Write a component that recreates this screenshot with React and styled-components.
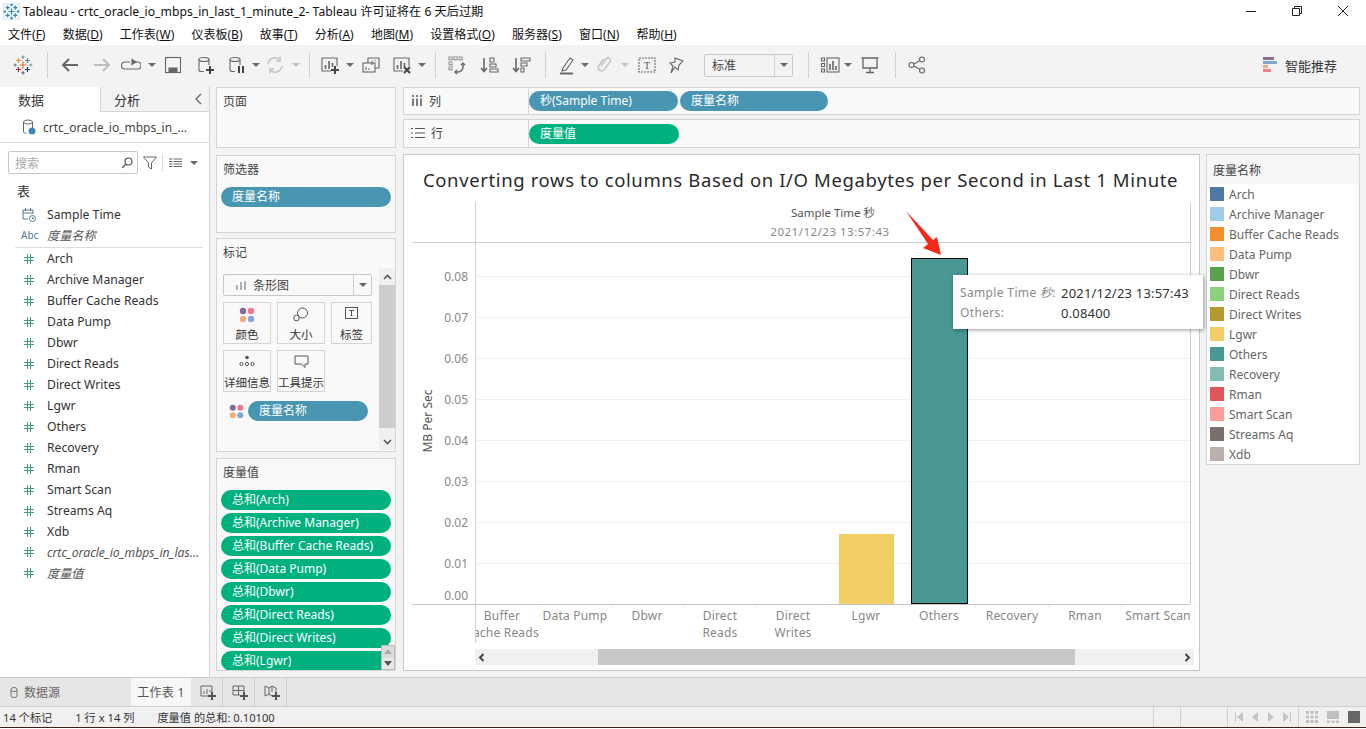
import React from 'react';
import styled, { createGlobalStyle } from 'styled-components';

const GlobalStyle = createGlobalStyle`
  html, body { margin: 0; padding: 0; background: #fff; overflow: hidden; }
  * { box-sizing: border-box; }
  body { font-family: "Noto Sans", "Noto Sans CJK SC", sans-serif; color: #333; }
`;

const Page = styled.div`
  width: 1366px;
  height: 729px;
  display: flex;
  flex-direction: column;
  overflow: hidden;
`;

const TitleBar = styled.div`
  height: 22px;
  display: flex;
  align-items: center;
  padding-left: 3px;
  background: #fff;
  font-size: 12.2px;
  color: #111;
`;
const TitleText = styled.span`
  margin-left: 3px;
  flex: 1;
`;
const WinBtn = styled.div`
  width: 46px;
  height: 22px;
  display: flex;
  align-items: center;
  justify-content: center;
`;

const MenuBar = styled.div`
  height: 23px;
  display: flex;
  align-items: center;
  background: #fff;
  padding-left: 8px;
  gap: 17.2px;
  font-size: 12px;
  color: #111;
`;
const MenuItem = styled.span`
  u { text-underline-offset: 1px; }
`;

const Toolbar = styled.div`
  height: 40px;
  display: flex;
  align-items: center;
  background: #f3f3f3;
`;
const Tool = styled.div`
  flex: none;
  width: ${p => p.$w || 20}px;
  height: 24px;
  margin-left: ${p => p.$ml}px;
  display: flex;
  align-items: center;
  justify-content: center;
`;
const Sep = styled.div`
  flex: none;
  width: 1px;
  height: 26px;
  margin-left: ${p => p.$ml}px;
  background: #cfcfcf;
`;
const Caret = styled.div`
  flex: none;
  width: 0;
  height: 0;
  margin-left: ${p => p.$ml}px;
  border-left: 4px solid transparent;
  border-right: 4px solid transparent;
  border-top: 4px solid ${p => (p.$off ? '#c4c4c4' : '#6a6a6a')};
`;
const ComboBox = styled.div`
  flex: none;
  width: ${p => p.$w}px;
  height: ${p => p.$h}px;
  margin-left: ${p => p.$ml || 0}px;
  display: flex;
  align-items: center;
  background: ${p => p.$bg || '#f3f3f3'};
  border: 1px solid #c8c8c8;
  border-radius: 2px;
  font-size: 12px;
  color: #444;
`;
const ComboText = styled.div`
  flex: 1;
  display: flex;
  align-items: center;
  gap: 7px;
  padding-left: ${p => p.$pl || 7}px;
  min-width: 0;
`;
const ComboArrow = styled.div`
  width: 18px;
  height: 100%;
  border-left: 1px solid #d0d0d0;
  display: flex;
  align-items: center;
  justify-content: center;
  &::after {
    content: '';
    border-left: 4px solid transparent;
    border-right: 4px solid transparent;
    border-top: 4px solid #666;
  }
`;
const SmartBtn = styled.div`
  margin-left: auto;
  margin-right: 29px;
  display: flex;
  align-items: center;
  gap: 6px;
  font-size: 13px;
  color: #333;
`;

const Main = styled.div`
  height: 592px;
  display: flex;
  background: #f3f3f3;
`;

const DataPane = styled.div`
  width: 210px;
  flex: none;
  background: #fff;
  border-right: 1px solid #d4d4d4;
  display: flex;
  flex-direction: column;
  border-top: 2px solid #f3f3f3;
`;
const PaneTabs = styled.div`
  height: 25px;
  display: flex;
  font-size: 13px;
`;
const PaneTab = styled.div`
  width: ${p => p.$w}px;
  display: flex;
  align-items: center;
  padding-left: ${p => p.$pl}px;
  position: relative;
  color: #333;
  background: ${p => (p.$on ? '#fff' : '#f3f3f3')};
  border-left: ${p => (p.$on ? 'none' : '1px solid #d4d4d4')};
  border-bottom: ${p => (p.$on ? 'none' : '1px solid #d4d4d4')};
`;
const Chevron = styled.span`
  position: absolute;
  right: 6px;
  top: 6px;
  display: flex;
`;
const SourceRow = styled.div`
  height: 31px;
  display: flex;
  align-items: center;
  gap: 7px;
  padding-left: 22px;
  font-size: 12px;
  color: #444;
  border-bottom: 1px solid #e0e0e0;
`;
const SourceName = styled.span`
  width: 146px;
  white-space: nowrap;
  overflow: hidden;
  text-overflow: ellipsis;
`;
const SearchRow = styled.div`
  display: flex;
  align-items: center;
  padding: 8px 0 0 8px;
`;
const SearchBox = styled.div`
  width: 130px;
  height: 23px;
  border: 1px solid #c8c8c8;
  border-radius: 2px;
  display: flex;
  align-items: center;
  justify-content: space-between;
  padding: 0 4px 0 6px;
  font-size: 12px;
  color: #aaa;
`;
const SearchTools = styled.div`
  display: flex;
  align-items: center;
  margin-left: 5px;
`;
const SearchSep = styled.div`
  width: 1px;
  height: 18px;
  background: #ddd;
  margin: 0 6px 0 5px;
`;
const SectionLabel = styled.div`
  font-size: 13px;
  color: #333;
  padding: 7px 0 0 17px;
  height: 30px;
`;
const FieldRow = styled.div`
  height: ${p => p.$h || 21}px;
  display: flex;
  align-items: center;
  font-size: 12.2px;
  color: ${p => (p.$italic ? '#555' : '#333')};
  font-style: ${p => (p.$italic ? 'italic' : 'normal')};
`;
const FieldIcon = styled.span`
  width: 47px;
  flex: none;
  display: flex;
  justify-content: ${p => (p.$abc ? 'flex-start' : 'center')};
  padding-left: ${p => (p.$abc ? '21px' : '10px')};
  font-size: 10px;
  font-style: normal;
  color: #4e7a9c;
`;
const FieldText = styled.span`
  white-space: nowrap;
  overflow: hidden;
  text-overflow: ellipsis;
  width: 153px;
`;
const FieldDivider = styled.div`
  height: 1px;
  background: #ddd;
  margin: 3px 6px 0 15px;
`;

const Cards = styled.div`
  width: 180px;
  flex: none;
  margin-left: 6px;
  padding-top: 2px;
  display: flex;
  flex-direction: column;
`;
const Card = styled.div`
  height: ${p => p.$h}px;
  margin-top: ${p => p.$mt || 0}px;
  background: #f9f9f9;
  border: 1px solid #d4d4d4;
  position: relative;
  overflow: hidden;
  flex: none;
`;
const CardTitle = styled.div`
  font-size: 12px;
  color: #444;
  padding: 4px 0 0 6px;
  height: 24px;
`;
const Pill = styled.div`
  width: ${p => p.$w}px;
  height: 20px;
  flex: none;
  margin-left: ${p => p.$ml || 0}px;
  border-radius: 10px;
  background: ${p => (p.$green ? '#00b180' : '#4996b2')};
  color: #fff;
  font-size: 12px;
  line-height: 20px;
  padding-left: 11px;
  white-space: nowrap;
  overflow: hidden;
`;
const MarksBody = styled.div`
  display: flex;
  justify-content: space-between;
`;
const MarksLeft = styled.div`
  padding: 11px 0 0 6px;
`;
const MarkGrid = styled.div`
  display: grid;
  grid-template-columns: 48px 48px 41px;
  grid-auto-rows: 42px;
  gap: 6px;
  margin-top: 6px;
`;
const MarkBtn = styled.div`
  border: 1px solid #d4d4d4;
  background: #f9f9f9;
  display: flex;
  flex-direction: column;
  align-items: center;
  justify-content: space-between;
  padding: 4px 0 1px;
  font-size: 11.5px;
  line-height: 14px;
  color: #333;
  white-space: nowrap;
`;
const MarkPillRow = styled.div`
  display: flex;
  align-items: center;
  margin: 9px 0 0 6px;
`;
const VScroll = styled.div`
  width: 16px;
  height: 182px;
  margin-top: 5px;
  background: #f0f0f0;
  display: flex;
  flex-direction: column;
  align-items: center;
`;
const VThumb = styled.div`
  width: 16px;
  height: 143px;
  background: #cdcdcd;
`;
const ScrollArrow = styled.div`
  height: 17px;
  display: flex;
  align-items: center;
  margin-top: ${p => (p.$end ? 'auto' : '0')};
`;
const MeasureList = styled.div`
  display: flex;
  flex-direction: column;
  gap: 3px;
  padding: 7px 0 0 4px;
`;
const MiniScroll = styled.div`
  position: absolute;
  right: 0;
  bottom: 0;
  width: 14px;
  height: 25px;
  display: flex;
  flex-direction: column;
  background: #dcdcdc;
  border: 1px solid #bcbcbc;
`;
const MiniArrow = styled.div`
  flex: 1;
  display: flex;
  align-items: center;
  justify-content: center;
  background: ${p => p.$bg};
  &::after {
    content: '';
    border-left: 4px solid transparent;
    border-right: 4px solid transparent;
    ${p => (p.$up ? 'border-bottom: 5px solid #aaa;' : 'border-top: 5px solid #555;')}
  }
`;

const Workspace = styled.div`
  flex: 1;
  min-width: 0;
  margin-left: 7px;
  padding: 2px 6px 0 0;
  display: flex;
  flex-direction: column;
`;
const Shelf = styled.div`
  height: ${p => p.$h}px;
  margin-top: ${p => p.$mt || 0}px;
  background: #f9f9f9;
  border: 1px solid #d4d4d4;
  display: flex;
  align-items: center;
  flex: none;
`;
const ShelfLabel = styled.div`
  width: 125px;
  height: 100%;
  flex: none;
  display: flex;
  align-items: center;
  gap: 6px;
  padding: 0 0 1px 7px;
  font-size: 12px;
  color: #444;
  border-right: 1px solid #d4d4d4;
`;
const ViewRow = styled.div`
  display: flex;
  margin-top: 6px;
  gap: 6px;
`;
const ChartPanel = styled.div`
  width: 797px;
  height: 517px;
  background: #fff;
  border: 1px solid #c8c8c8;
  position: relative;
  display: flex;
  flex-direction: column;
`;
const ChartTitle = styled.div`
  height: 47px;
  padding: 11px 0 0 19px;
  font-size: 18.5px;
  line-height: 27px;
  font-weight: 400;
  color: #2b2b2b;
  letter-spacing: 0.62px;
  white-space: nowrap;
`;
const ChartSvg = styled.svg`
  display: block;
  width: 795px;
  height: 446px;
  font-family: "Noto Sans", "Noto Sans CJK SC", sans-serif;
`;
const HScroll = styled.div`
  height: 16px;
  margin: 1px 5px 0 71px;
  background: #f0f0f0;
  display: flex;
  align-items: center;
  justify-content: space-between;
  position: relative;
  padding: 0 3px;
`;
const HThumb = styled.div`
  position: absolute;
  left: 123px;
  width: 477px;
  top: 0;
  bottom: 0;
  background: #c8c8c8;
`;
const Tooltip = styled.div`
  position: absolute;
  left: 549px;
  top: 120px;
  width: 250px;
  height: 54px;
  background: #fff;
  box-shadow: 1px 1px 4px rgba(0, 0, 0, 0.4);
  padding: 8px 0 0 7px;
  font-size: 12px;
  line-height: 20px;
  z-index: 2;
  display: grid;
  grid-template-columns: 101px 1fr;
  grid-auto-rows: 20px;
  white-space: nowrap;
  letter-spacing: 0.35px;
`;
const TipKey = styled.span`
  color: #8a8a8a;
`;
const TipVal = styled.span`
  color: #333;
  font-size: 13px;
  letter-spacing: 0.2px;
`;
const Legend = styled.div`
  width: 154px;
  height: 311px;
  flex: none;
  background: #fff;
  border: 1px solid #d4d4d4;
`;
const LegendTitle = styled.div`
  height: 29px;
  background: #f7f7f7;
  font-size: 12px;
  padding: 6px 0 0 6px;
  color: #444;
`;
const LegendRow = styled.div`
  height: 20px;
  display: flex;
  align-items: center;
  gap: 5px;
  padding-left: 3px;
  font-size: 12px;
  color: #666;
`;
const Swatch = styled.span`
  width: 14px;
  height: 14px;
  flex: none;
  background: ${p => p.$c};
`;

const TabBar = styled.div`
  height: 30px;
  display: flex;
  background: #e6e6e6;
  border-top: 1px solid #cfcfcf;
  border-bottom: 1px solid #cfcfcf;
  font-size: 12px;
  color: #555;
`;
const SourceTab = styled.div`
  width: 131px;
  display: flex;
  align-items: center;
  gap: 6px;
  padding-left: 10px;
  color: #666;
`;
const SheetTab = styled.div`
  width: 60px;
  display: flex;
  align-items: center;
  justify-content: center;
  background: #f7f7f7;
  letter-spacing: 0.3px;
`;
const AddTab = styled.div`
  width: 32px;
  display: flex;
  align-items: center;
  justify-content: center;
  padding-left: 2px;
  border-right: 1px solid #cfcfcf;
`;
const StatusBar = styled.div`
  height: 21px;
  display: flex;
  align-items: center;
  padding-left: 3px;
  background: #f0f0f0;
  font-size: 11.2px;
  color: #333;
  border-bottom: 1px solid #3a2218;
`;
const StatusText = styled.span`
  margin-right: ${p => p.$mr}px;
  white-space: nowrap;
`;
const StatusCell = styled.div`
  height: 100%;
  width: ${p => p.$w}px;
  flex: none;
  border-left: 1px solid #cfcfcf;
  display: flex;
  align-items: center;
  justify-content: center;
  gap: ${p => p.$gap || 0}px;
  margin-left: ${p => (p.$push ? 'auto' : '0')};
`;
const NavIcon = styled.svg`
  width: 10px;
  height: 10px;
`;
const ScrollEnd = styled.svg`
  position: relative;
  z-index: 1;
  width: 7px;
  height: 9px;
`;

const Svg = ({ s = 20, vb = 20, children, ...rest }) => (
  <svg width={s} height={s} viewBox={`0 0 ${vb} ${vb}`} fill="none" stroke="#666" strokeWidth="1.1" {...rest}>
    {children}
  </svg>
);

const crosses = [
  [10, 10, 3.5, '#e8762d'],
  [5.5, 5.5, 2.5, '#eb912b'],
  [14.5, 5.5, 2.5, '#59879b'],
  [5.5, 14.5, 2.5, '#c72035'],
  [14.5, 14.5, 2.5, '#1f447a'],
  [10, 2.2, 1.6, '#7099a6'],
  [10, 17.8, 1.6, '#5b6591'],
  [2.2, 10, 1.6, '#59879b'],
  [17.8, 10, 1.6, '#7099a6'],
];
const LogoIcon = () => (
  <Svg strokeWidth="1.2">
    {crosses.map(([x, y, r, c]) => (
      <path key={`${x}-${y}`} d={`M${x} ${y - r}v${r * 2}M${x - r} ${y}h${r * 2}`} stroke={c} />
    ))}
  </Svg>
);
const TitleLogo = () => (
  <Svg s={17}>
    <rect x="0.5" y="0.5" width="19" height="19" fill="#f2f5f8" stroke="#dfe3e8" />
    {crosses.map(([x, y, r]) => (
      <path key={`${x}-${y}`} d={`M${x} ${y - r}v${r * 2}M${x - r} ${y}h${r * 2}`} stroke="#3a87c0" strokeWidth="1.4" />
    ))}
  </Svg>
);
const Back = () => (
  <Svg strokeWidth="2"><path d="M18 10H3M9 4l-6 6 6 6" /></Svg>
);
const Forward = () => (
  <Svg strokeWidth="2" stroke="#bdbdbd"><path d="M2 10h15M11 4l6 6-6 6" /></Svg>
);
const Loop = () => (
  <Svg><path d="M9 7H4a3 3 0 0 0 0 7h12a3 3 0 0 0 1-7h-2" /><path d="M11 4.5l4 2.5-4 2.5z" fill="#666" /></Svg>
);
const Save = () => (
  <Svg><rect x="2.5" y="2.5" width="15" height="15" /><path d="M6 17v-4h8v4" fill="#666" /></Svg>
);
const Cyl = ({ children }) => (
  <Svg>
    <ellipse cx="9" cy="4.5" rx="5" ry="2" />
    <path d="M4 4.5V15a2 2 0 0 0 2 1.5h3M14 4.5V10" />
    {children}
  </Svg>
);
const Plus = ({ x = 15, y = 15 }) => (
  <path d={`M${x - 4} ${y}h8M${x} ${y - 4}v8`} stroke="#444" strokeWidth="2" />
);
const SheetBars = ({ children }) => (
  <Svg>
    <path d="M11 16H2V3h15v8" />
    <path d="M5.5 14v-4M9 14V6M12.5 12V8" strokeWidth="1.6" />
    {children}
  </Svg>
);
const Refresh = () => (
  <Svg stroke="#c4c4c4" strokeWidth="1.6">
    <path d="M3 9a7 7 0 0 1 12-4M17 11a7 7 0 0 1-12 4" />
    <path d="M15 1.5V6h-4M5 18.5V14h4" />
  </Svg>
);
const Duplicate = () => (
  <Svg>
    <path d="M7 8V3h11v10h-4" />
    <rect x="2" y="8" width="12" height="9" />
    <path d="M11 10V6M14 6V5M5 15v-3M8 15v-2" />
  </Svg>
);
const Swap = () => (
  <Svg>
    <path d="M2 2h3v3H2zM7 2h3v3H7zM12 2h3v3h-3zM2 7h3v3H2zM2 12h3v3H2z" strokeDasharray="1.5 0.8" />
    <path d="M16 8v4a5 5 0 0 1-5 5H9" strokeWidth="1.5" />
    <path d="M14 10l2-2 2 2M10 15l-2 2 2 2" strokeWidth="1.4" />
  </Svg>
);
const SortAsc = () => (
  <Svg>
    <path d="M5 3v13M2 13l3 3.5L8 13" strokeWidth="1.6" />
    <path d="M11 3h4v4h-4zM11 9h6v3h-6zM11 14h8v3h-8z" />
  </Svg>
);
const SortDesc = () => (
  <Svg>
    <path d="M5 3v13M2 13l3 3.5L8 13" strokeWidth="1.6" />
    <path d="M10 3h9v3h-9zM10 8h6v3h-6zM10 13h3v4h-3z" />
  </Svg>
);
const Pen = () => (
  <Svg>
    <path d="M5 13L12 3l3 2-7 10-4 1z" />
    <path d="M2 18.5h13" strokeWidth="2" />
  </Svg>
);
const Clip = () => (
  <Svg stroke="#c4c4c4" strokeWidth="1.5">
    <path d="M6 11l5-7a2.5 2.5 0 0 1 4 3l-6 8a3.5 3.5 0 0 1-5.5-4l5-7" />
  </Svg>
);
const TextBox = () => (
  <Svg>
    <rect x="2" y="3" width="16" height="14" strokeDasharray="2 1" />
    <text x="10" y="14" textAnchor="middle" fontSize="10" fill="#555" stroke="none" fontFamily="Liberation Serif, serif">T</text>
  </Svg>
);
const Pin = () => (
  <Svg>
    <path d="M8 3l8 3-4 4-1 5-3-3-4 6 2-7-3-3 5-1z" />
  </Svg>
);
const ShowMe = () => (
  <Svg>
    <path d="M1.5 3h3v3h-3zM1.5 8.5h3v3h-3zM1.5 14h3v3h-3z" />
    <rect x="7" y="3" width="12" height="14" />
    <path d="M10 15V9M13 15V6M16 15v-4" strokeWidth="1.6" />
  </Svg>
);
const Present = () => (
  <Svg>
    <path d="M1.5 3h17M3 3v10h14V3M10 13v4M6 17.5h8" strokeWidth="1.3" />
  </Svg>
);
const Share = () => (
  <Svg>
    <circle cx="4.5" cy="10" r="2.5" />
    <circle cx="15" cy="4.5" r="2.5" />
    <circle cx="15" cy="15.5" r="2.5" />
    <path d="M7 9l6-3.5M7 11l6 3.5" />
  </Svg>
);
const Smart = () => (
  <svg width="16" height="16" viewBox="0 0 16 16">
    <rect x="0" y="0" width="11" height="3" fill="#8b6f97" />
    <rect x="0" y="4" width="14" height="3" fill="#7fa6d0" />
    <rect x="0" y="8" width="5" height="3" fill="#f4ad7f" />
    <rect x="0" y="12" width="8" height="3" fill="#f57f8f" />
  </svg>
);
const Dots = ({ s = 16 }) => (
  <svg width={s} height={s} viewBox="0 0 16 16">
    <circle cx="4" cy="4" r="3.2" fill="#886a96" />
    <circle cx="12" cy="4" r="3.2" fill="#f5758c" />
    <circle cx="4" cy="12" r="3.2" fill="#f4ab7f" />
    <circle cx="12" cy="12" r="3.2" fill="#84a8d2" />
  </svg>
);
const Hash = () => (
  <svg width="10" height="10" viewBox="0 0 10 10" fill="none" stroke="#3f9f7f" strokeWidth="1">
    <path d="M3.5 0v10M6.5 0v10M0 3.5h10M0 6.5h10" />
  </svg>
);
const Rows = () => (
  <svg width="14" height="12" viewBox="0 0 14 12" fill="none" stroke="#555">
    <path d="M0 1.5h2M4 1.5h10M0 6h2M4 6h10M0 10.5h2M4 10.5h10" />
  </svg>
);
const Cols = () => (
  <svg width="12" height="11" viewBox="0 0 12 11" fill="none" stroke="#555" strokeWidth="1.5">
    <path d="M2 0v2M6 0v2M10 0v2M2 3.500v7.500M6 3.500v7.500M10 3.500v7.500" />
  </svg>
);
const DsCheck = () => (
  <svg width="14" height="16" viewBox="0 0 14 16" fill="none" stroke="#666">
    <ellipse cx="6" cy="3" rx="4.5" ry="2" />
    <path d="M1.500 3v9a2 2 0 0 0 3 2M10.500 3v6" />
    <circle cx="10" cy="12" r="3.500" fill="#3f88b5" stroke="none" />
  </svg>
);
const Chev = ({ d = 'M7 1L2 6l5 5' }) => (
  <svg width="9" height="12" viewBox="0 0 9 12" fill="none" stroke="#666" strokeWidth="1.3"><path d={d} /></svg>
);
const BoldChev = ({ d }) => (
  <ScrollEnd viewBox="0 0 7 9" fill="none" stroke="#444" strokeWidth="2"><path d={d} /></ScrollEnd>
);
const CalClock = () => (
  <svg width="14" height="14" viewBox="0 0 14 14" fill="none" stroke="#4e7a9c">
    <path d="M6 11H1V2h10v4M1 5h10M3.5 0v3M8.5 0v3" />
    <circle cx="10.5" cy="10.5" r="3" />
    <path d="M10.5 9v1.5h1.5" />
  </svg>
);
const Search = () => (
  <svg width="12" height="12" viewBox="0 0 12 12" fill="none" stroke="#555" strokeWidth="1.2">
    <circle cx="7.5" cy="4.5" r="3.5" />
    <path d="M5 7l-4 4" />
  </svg>
);
const Filter = () => (
  <svg width="14" height="14" viewBox="0 0 14 14" fill="none" stroke="#666">
    <path d="M0.5 1h13L8.5 7v6l-3-2V7z" />
  </svg>
);
const ListView = () => (
  <svg width="13" height="10" viewBox="0 0 13 10" stroke="#666">
    <path d="M0 1h3.5M4.5 1h8.5M0 3.500h3.500M4.500 3.500h8.500M0 6h3.500M4.500 6h8.500M0 8.500h3.500M4.500 8.500h8.500" />
  </svg>
);
const MiniBars = () => (
  <svg width="10" height="9" viewBox="0 0 10 9" fill="#b0b0b0">
    <rect x="0" y="4" width="2" height="5" />
    <rect x="4" y="1" width="2" height="8" />
    <rect x="8" y="0" width="2" height="9" />
  </svg>
);
const SizeIco = () => (
  <svg width="16" height="15" viewBox="0 0 16 15" fill="none" stroke="#555">
    <circle cx="9.5" cy="6" r="5" />
    <circle cx="3.5" cy="11" r="2.8" fill="#f9f9f9" />
  </svg>
);
const LabelIco = () => (
  <svg width="14" height="13" viewBox="0 0 14 13" fill="none" stroke="#555">
    <rect x="0.5" y="0.5" width="12" height="11" />
    <path d="M4 3.5h5M6.5 3.5v5M5.500 8.500h2" />
  </svg>
);
const DetailIco = () => (
  <svg width="16" height="12" viewBox="0 0 16 12" fill="none" stroke="#555">
    <circle cx="8" cy="2.5" r="1.8" fill="#555" stroke="none" />
    <circle cx="2.5" cy="9" r="1.6" />
    <circle cx="8" cy="9" r="1.6" />
    <circle cx="13.5" cy="9" r="1.6" />
  </svg>
);
const TipIco = () => (
  <svg width="15" height="14" viewBox="0 0 15 14" fill="none" stroke="#555">
    <path d="M1 1h13v8h-3v3.5L7.5 9H1z" />
  </svg>
);
const ScrollChev = ({ up }) => (
  <svg width="9" height="6" viewBox="0 0 9 6" fill="none" stroke="#555" strokeWidth="1.6">
    <path d={up ? 'M1 5l3.5-3.5L8 5' : 'M1 1l3.5 3.5L8 1'} />
  </svg>
);
const DbTab = () => (
  <svg width="8" height="11" viewBox="0 0 8 11" fill="none" stroke="#777">
    <path d="M1 2.5a3 2 0 0 1 6 0V9a3 1.5 0 0 1-6 0zM1 3a3 1.5 0 0 0 6 0" />
  </svg>
);
const AddSheet = ({ kind }) => (
  <svg width="16" height="16" viewBox="0 0 16 16" fill="none" stroke="#666">
    {kind === 'sheet' && <path d="M8 12H1V2h11v6M4 10V7M7 10V5M10 8V6" />}
    {kind === 'dash' && <path d="M8 11H1V2h11v6M6.5 2v9M1 6.5h11" />}
    {kind === 'story' && <path d="M8 12l-3-2-4 2V2l4 2 3-2 4 2v4M5 4v6M8 2v6" />}
    <path d="M12 8v8M8 12h8" stroke="#555" strokeWidth="2" />
  </svg>
);

const menus = [
  ['文件', 'F'], ['数据', 'D'], ['工作表', 'W'], ['仪表板', 'B'], ['故事', 'T'], ['分析', 'A'],
  ['地图', 'M'], ['设置格式', 'O'], ['服务器', 'S'], ['窗口', 'N'], ['帮助', 'H'],
];

const legend = [
  ['Arch', '#4e79a7'], ['Archive Manager', '#a0cbe8'], ['Buffer Cache Reads', '#f28e2b'],
  ['Data Pump', '#ffbe7d'], ['Dbwr', '#59a14f'], ['Direct Reads', '#8cd17d'],
  ['Direct Writes', '#b6992d'], ['Lgwr', '#f1ce63'], ['Others', '#499894'],
  ['Recovery', '#86bcb6'], ['Rman', '#e15759'], ['Smart Scan', '#ff9d9a'],
  ['Streams Aq', '#79706e'], ['Xdb', '#bab0ac'],
];

const measures = ['Arch', 'Archive Manager', 'Buffer Cache Reads', 'Data Pump', 'Dbwr', 'Direct Reads', 'Direct Writes', 'Lgwr'];

const yTicks = [
  ['0.08', 277], ['0.07', 318], ['0.06', 359], ['0.05', 400],
  ['0.04', 441], ['0.03', 482], ['0.02', 523], ['0.01', 564],
];

const xLabels = [
  [502, 'Buffer', 'Cache Reads'], [575, 'Data Pump'], [647, 'Dbwr'], [720, 'Direct', 'Reads'],
  [793, 'Direct', 'Writes'], [866, 'Lgwr'], [939, 'Others'], [1012, 'Recovery'], [1085, 'Rman'], [1158, 'Smart Scan'],
];

const Chart = () => (
  <ChartSvg viewBox="404 202 795 446">
    <defs>
      <clipPath id="xclip"><rect x="476" y="604" width="714" height="44" /></clipPath>
    </defs>
    <path d="M475.5 202V643M1190.5 202V604" stroke="#d0d0d0" />
    <path d="M412 242.5H1190" stroke="#cfcfcf" />
    {yTicks.map(([l, y]) => (
      <path key={l} d={`M476 ${y - 0.5}H1190`} stroke="#efefef" />
    ))}
    <path d="M412 604.5H1190" stroke="#c8c8c8" />
    {xLabels.map(([x]) => (
      <path key={x} d={`M${x + 36.5} 605V608`} stroke="#efefef" />
    ))}
    <rect x="839" y="534" width="55" height="70" fill="#f1ce63" />
    <rect x="911.5" y="258.5" width="56" height="345" fill="#499894" stroke="#000" />
    <text x="833" y="217" textAnchor="middle" fontSize="11.5" fill="#555">Sample Time 秒</text>
    <text x="830" y="236" textAnchor="middle" fontSize="11.5" fill="#888" letterSpacing="0.5">2021/12/23 13:57:43</text>
    {yTicks.map(([l, y]) => (
      <text key={l} x="468" y={y + 4} textAnchor="end" fontSize="12" fill="#888">{l}</text>
    ))}
    <text x="468" y="600" textAnchor="end" fontSize="12" fill="#888">0.00</text>
    <text transform="translate(432 421) rotate(-90)" textAnchor="middle" fontSize="12" fill="#555">MB Per Sec</text>
    <g clipPath="url(#xclip)" fontSize="12" fill="#888" textAnchor="middle" letterSpacing="0.2">
      {xLabels.map(([x, a, b]) => (
        <g key={x}>
          <text x={x} y="620">{a}</text>
          {b && <text x={x} y="637">{b}</text>}
        </g>
      ))}
    </g>
    <path d="M906 211L933 240L937 237L941 255L923 248L928 244Z" fill="#f5281c" />
  </ChartSvg>
);

const fields = ['Arch', 'Archive Manager', 'Buffer Cache Reads', 'Data Pump', 'Dbwr', 'Direct Reads', 'Direct Writes', 'Lgwr', 'Others', 'Recovery', 'Rman', 'Smart Scan', 'Streams Aq', 'Xdb'];

const App = () => (
  <Page>
    <GlobalStyle />
    <TitleBar>
      <TitleLogo />
      <TitleText>Tableau - crtc_oracle_io_mbps_in_last_1_minute_2- Tableau 许可证将在 6 天后过期</TitleText>
      <WinBtn>
        <Svg s={12} vb={12} stroke="#222" strokeWidth="1"><path d="M1 6.5h10" /></Svg>
      </WinBtn>
      <WinBtn>
        <Svg s={12} vb={12} stroke="#222" strokeWidth="1"><path d="M1.5 3.5h7v7h-7zM3.5 3.5v-2h7v7h-2" /></Svg>
      </WinBtn>
      <WinBtn>
        <Svg s={12} vb={12} stroke="#222" strokeWidth="1"><path d="M1 1l10 10M11 1L1 11" /></Svg>
      </WinBtn>
    </TitleBar>
    <MenuBar>
      {menus.map(([n, k]) => (
        <MenuItem key={k}>{n}(<u>{k}</u>)</MenuItem>
      ))}
    </MenuBar>
    <Toolbar>
      <Tool $ml={13}><LogoIcon /></Tool>
      <Sep $ml={14} />
      <Tool $ml={12}><Back /></Tool>
      <Tool $ml={12}><Forward /></Tool>
      <Tool $ml={9}><Loop /></Tool>
      <Caret $ml={7} />
      <Tool $ml={7}><Save /></Tool>
      <Tool $ml={12}><Cyl><Plus /></Cyl></Tool>
      <Tool $ml={11}><Cyl><path d="M13 11v7M17 11v7" stroke="#444" strokeWidth="2" /></Cyl></Tool>
      <Caret $ml={6} />
      <Tool $ml={5}><Refresh /></Tool>
      <Caret $ml={7} $off />
      <Sep $ml={9} />
      <Tool $ml={10}><SheetBars><Plus /></SheetBars></Tool>
      <Caret $ml={6} />
      <Tool $ml={7}><Duplicate /></Tool>
      <Tool $ml={11}><SheetBars><path d="M12 12l6 6M18 12l-6 6" stroke="#444" strokeWidth="2" /></SheetBars></Tool>
      <Caret $ml={6} />
      <Sep $ml={9} />
      <Tool $ml={11}><Swap /></Tool>
      <Tool $ml={12}><SortAsc /></Tool>
      <Tool $ml={12}><SortDesc /></Tool>
      <Sep $ml={14} />
      <Tool $ml={12}><Pen /></Tool>
      <Caret $ml={3} />
      <Tool $ml={6}><Clip /></Tool>
      <Caret $ml={6} $off />
      <Tool $ml={8}><TextBox /></Tool>
      <Tool $ml={10}><Pin /></Tool>
      <ComboBox $w={89} $h={23} $ml={17}>
        <ComboText>标准</ComboText>
        <ComboArrow />
      </ComboBox>
      <Sep $ml={15} />
      <Tool $ml={11}><ShowMe /></Tool>
      <Caret $ml={4} />
      <Tool $ml={8}><Present /></Tool>
      <Sep $ml={15} />
      <Tool $ml={11}><Share /></Tool>
      <SmartBtn><Smart />智能推荐</SmartBtn>
    </Toolbar>
    <Main>
      <DataPane>
        <PaneTabs>
          <PaneTab $w={100} $pl={18} $on>数据</PaneTab>
          <PaneTab $w={109} $pl={13}>分析<Chevron><Chev /></Chevron></PaneTab>
        </PaneTabs>
        <SourceRow><DsCheck /><SourceName>crtc_oracle_io_mbps_in_last_1_minute_2</SourceName></SourceRow>
        <SearchRow>
          <SearchBox>搜索<Search /></SearchBox>
          <SearchTools>
            <Filter />
            <SearchSep />
            <ListView />
            <Caret $ml={8} />
          </SearchTools>
        </SearchRow>
        <SectionLabel>表</SectionLabel>
        <FieldRow><FieldIcon><CalClock /></FieldIcon>Sample Time</FieldRow>
        <FieldRow $italic $h={19}><FieldIcon $abc>Abc</FieldIcon>度量名称</FieldRow>
        <FieldDivider />
        {fields.map(f => (
          <FieldRow key={f}><FieldIcon><Hash /></FieldIcon>{f}</FieldRow>
        ))}
        <FieldRow $italic $h={20}><FieldIcon><Hash /></FieldIcon><FieldText>crtc_oracle_io_mbps_in_last_1_minute_2</FieldText></FieldRow>
        <FieldRow $italic><FieldIcon><Hash /></FieldIcon>度量值</FieldRow>
      </DataPane>

      <Cards>
        <Card $h={61}><CardTitle>页面</CardTitle></Card>
        <Card $h={78} $mt={7}>
          <CardTitle>筛选器</CardTitle>
          <MeasureList><Pill $w={170}>度量名称</Pill></MeasureList>
        </Card>
        <Card $h={214} $mt={5}>
          <CardTitle>标记</CardTitle>
          <MarksBody>
            <MarksLeft>
              <ComboBox $w={149} $h={22} $bg="#f9f9f9">
                <ComboText $pl={12}><MiniBars />条形图</ComboText>
                <ComboArrow />
              </ComboBox>
              <MarkGrid>
                <MarkBtn><Dots />颜色</MarkBtn>
                <MarkBtn><SizeIco />大小</MarkBtn>
                <MarkBtn><LabelIco />标签</MarkBtn>
                <MarkBtn><DetailIco />详细信息</MarkBtn>
                <MarkBtn><TipIco />工具提示</MarkBtn>
              </MarkGrid>
              <MarkPillRow><Dots s={15} /><Pill $w={120} $ml={4}>度量名称</Pill></MarkPillRow>
            </MarksLeft>
            <VScroll>
              <ScrollArrow><ScrollChev up /></ScrollArrow>
              <VThumb />
              <ScrollArrow $end><ScrollChev /></ScrollArrow>
            </VScroll>
          </MarksBody>
        </Card>
        <Card $h={213} $mt={6}>
          <CardTitle>度量值</CardTitle>
          <MeasureList>
            {measures.map(m => <Pill key={m} $w={170} $green>总和({m})</Pill>)}
          </MeasureList>
          <MiniScroll>
            <MiniArrow $up $bg="#dcdcdc" />
            <MiniArrow $bg="#e8e8e8" />
          </MiniScroll>
        </Card>
      </Cards>

      <Workspace>
        <Shelf $h={28}>
          <ShelfLabel><Cols />列</ShelfLabel>
          <Pill $w={149}>秒(Sample Time)</Pill>
          <Pill $w={148} $ml={2}>度量名称</Pill>
        </Shelf>
        <Shelf $h={29} $mt={4}>
          <ShelfLabel><Rows />行</ShelfLabel>
          <Pill $w={150} $green>度量值</Pill>
        </Shelf>
        <ViewRow>
          <ChartPanel>
            <ChartTitle>Converting rows to columns Based on I/O Megabytes per Second in Last 1 Minute</ChartTitle>
            <Chart />
            <HScroll>
              <HThumb />
              <BoldChev d="M5.5 1L2 4.5 5.5 8" />
              <BoldChev d="M1.5 1L5 4.5 1.5 8" />
            </HScroll>
            <Tooltip>
              <TipKey>Sample Time <i>秒</i>:</TipKey><TipVal>2021/12/23 13:57:43</TipVal>
              <TipKey>Others:</TipKey><TipVal>0.08400</TipVal>
            </Tooltip>
          </ChartPanel>
          <Legend>
            <LegendTitle>度量名称</LegendTitle>
            {legend.map(([n, c]) => (
              <LegendRow key={n}><Swatch $c={c} />{n}</LegendRow>
            ))}
          </Legend>
        </ViewRow>
      </Workspace>
    </Main>
    <TabBar>
      <SourceTab><DbTab />数据源</SourceTab>
      <SheetTab>工作表 1</SheetTab>
      <AddTab><AddSheet kind="sheet" /></AddTab>
      <AddTab><AddSheet kind="dash" /></AddTab>
      <AddTab><AddSheet kind="story" /></AddTab>
    </TabBar>
    <StatusBar>
      <StatusText $mr={23}>14 个标记</StatusText>
      <StatusText $mr={23}>1 行 x 14 列</StatusText>
      <StatusText $mr={0}>度量值 的总和: 0.10100</StatusText>
      <StatusCell $w={27} $push />
      <StatusCell $w={47} />
      <StatusCell $w={71} $gap={6}>
        <NavIcon viewBox="0 0 10 10" fill="#c4c4c4"><path d="M1 0h1v10H1zM9 0v10L3 5z" /></NavIcon>
        <NavIcon viewBox="0 0 10 10" fill="#c4c4c4"><path d="M8 0v10L2 5z" /></NavIcon>
        <NavIcon viewBox="0 0 10 10" fill="#c4c4c4"><path d="M2 0v10l6-5z" /></NavIcon>
        <NavIcon viewBox="0 0 10 10" fill="#c4c4c4"><path d="M8 0h1v10H8zM1 0v10l6-5z" /></NavIcon>
      </StatusCell>
      <StatusCell $w={68} $gap={9}>
        <svg width="12" height="12" viewBox="0 0 12 12" fill="#c0c0c0"><path d="M0 0h3v3H0zM4.5 0h3v3h-3zM9 0h3v3H9zM0 4.5h3v3H0zM4.5 4.5h3v3h-3zM9 4.5h3v3H9zM0 9h3v3H0zM4.5 9h3v3h-3zM9 9h3v3H9z" /></svg>
        <svg width="12" height="12" viewBox="0 0 12 12" fill="#c0c0c0"><path d="M0 0h12v8H0zM0 9.5h3V12H0zM4.5 9.5h3V12h-3zM9 9.5h3V12H9z" /></svg>
        <svg width="12" height="12" viewBox="0 0 12 12" fill="#666"><path d="M0 0h12v12H0z" /></svg>
      </StatusCell>
    </StatusBar>
  </Page>
);

export default App;
